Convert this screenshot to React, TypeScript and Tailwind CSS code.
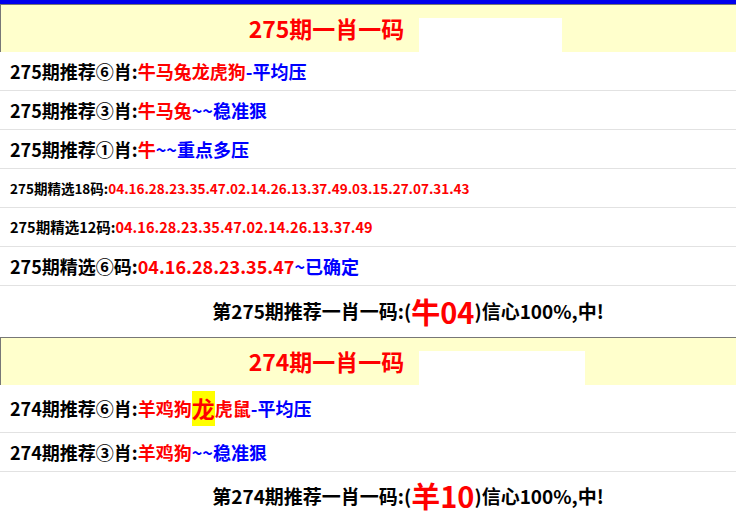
const F = { fontFamily: '"Noto Sans CJK SC", "Noto Sans", sans-serif' };

function Header({ title, patch }: { title: string; patch: string }) {
  return (
    <div className="relative h-[48px] bg-[#ffffcc] border-l border-t border-[#777] flex items-center justify-center">
      <span className="text-[23px] font-bold text-[#ff0000] mr-[84px] leading-none">{title}</span>
      <div className={`absolute bottom-0 left-[418px] h-[34px] bg-white ${patch}`} />
    </div>
  );
}

function Row({ children, h = "h-[39px]" }: { children: React.ReactNode; h?: string }) {
  return (
    <div className={`${h} flex items-center pl-[10px] border-b border-[#e2e2e2] font-bold text-black whitespace-nowrap`}>
      {children}
    </div>
  );
}

const R = "text-[#ff0000]";
const B = "text-[#0000ff]";

export default function App() {
  return (
    <div style={F} className="w-[736px] h-[521px] overflow-hidden bg-white border-t-4 border-[#0000ee]">
      <Header title="275期一肖一码" patch="w-[143px]" />
      <div className="text-[18px]">
        <Row>275期推荐⑥肖:<span className={R}>牛马兔龙虎狗</span><span className={B}>-平均压</span></Row>
        <Row>275期推荐③肖:<span className={R}>牛马兔</span><span className={B}>~~稳准狠</span></Row>
        <Row>275期推荐①肖:<span className={R}>牛</span><span className={B}>~~重点多压</span></Row>
        <Row><span className="text-[13.5px]">275期精选18码:<span className={R}>04.16.28.23.35.47.02.14.26.13.37.49.03.15.27.07.31.43</span></span></Row>
        <Row><span className="text-[14.5px]">275期精选12码:<span className={R}>04.16.28.23.35.47.02.14.26.13.37.49</span></span></Row>
        <Row>275期精选⑥码:<span className={R}>04.16.28.23.35.47</span><span className={B}>~已确定</span></Row>
        <div className="h-[51px] flex items-center justify-center font-bold text-[19px] pl-[80px]">
          第275期推荐一肖一码:(<span className={`${R} text-[29px]`}>牛04</span>)信心100%,中!
        </div>
      </div>
      <Header title="274期一肖一码" patch="w-[166px]" />
      <div className="text-[18px]">
        <Row h="h-[48px]">274期推荐⑥肖:<span className={R}>羊鸡狗</span><span className={`${R} text-[23px] bg-[#ffff00]`}>龙</span><span className={R}>虎鼠</span><span className={B}>-平均压</span></Row>
        <Row>274期推荐③肖:<span className={R}>羊鸡狗</span><span className={B}>~~稳准狠</span></Row>
        <div className="h-[48px] flex items-center justify-center font-bold text-[19px] pl-[80px]">
          第274期推荐一肖一码:(<span className={`${R} text-[29px]`}>羊10</span>)信心100%,中!
        </div>
      </div>
    </div>
  );
}
